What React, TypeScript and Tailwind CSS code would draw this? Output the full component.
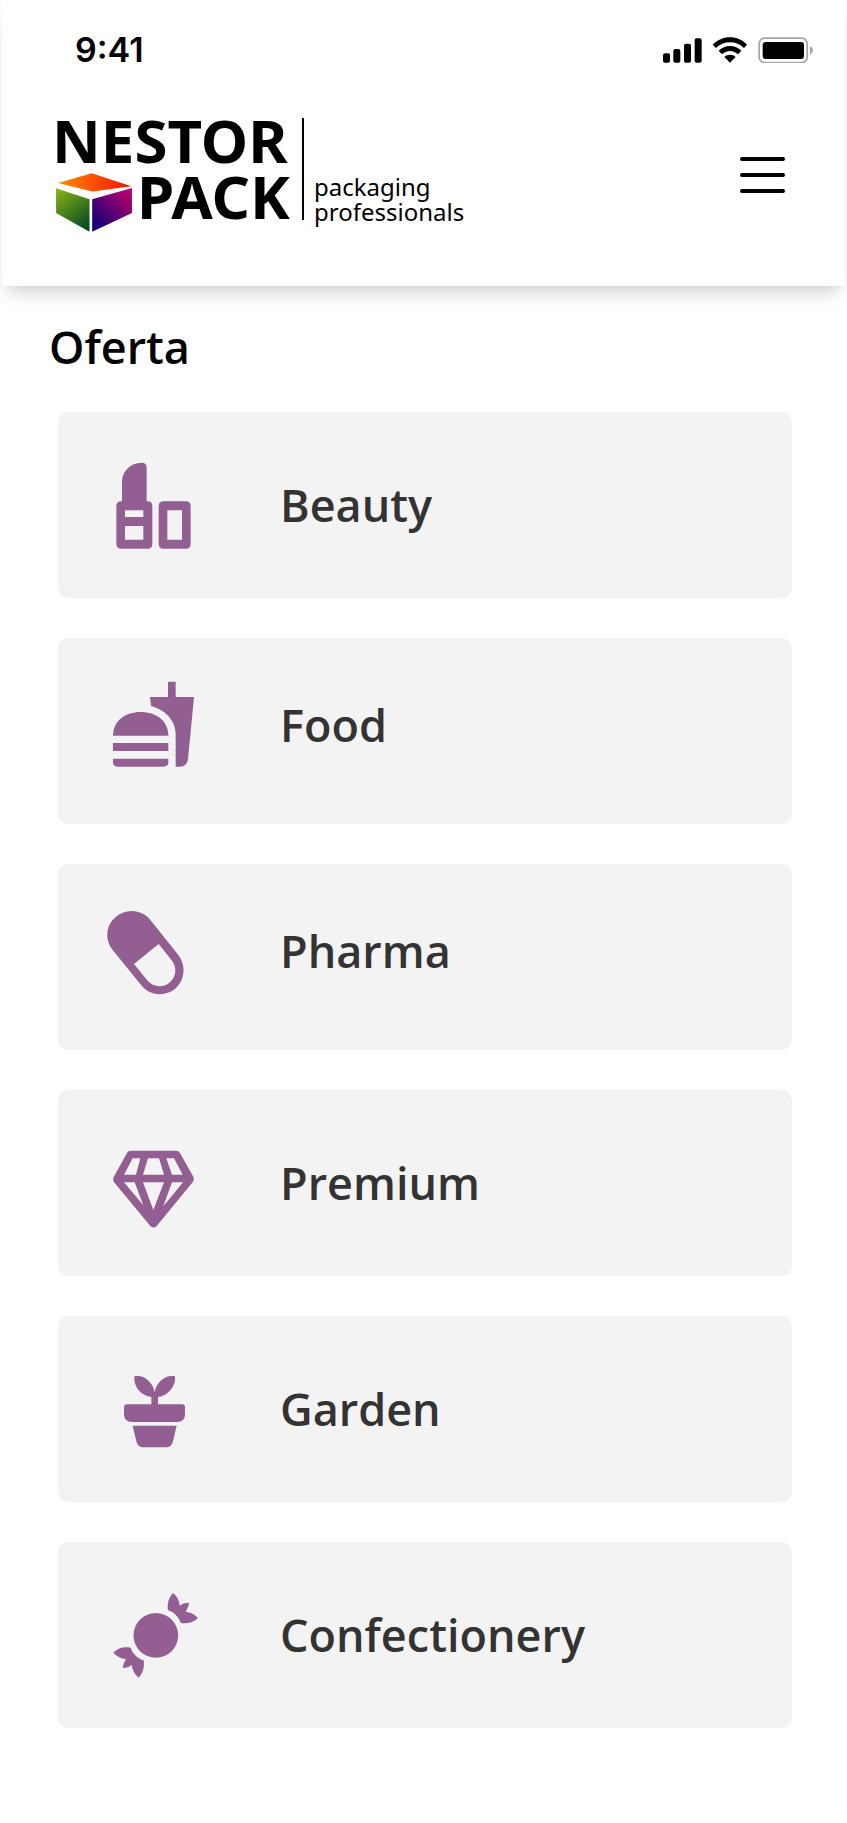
import type { ReactNode } from 'react';

type Category = {
  name: string;
  icon: ReactNode;
  raised?: boolean;
};

function Icon({ viewBox, children }: { viewBox: string; children: ReactNode }) {
  return (
    <svg viewBox={viewBox} className="size-[130px] shrink-0 fill-[#935f93]" aria-hidden="true">
      {children}
    </svg>
  );
}

const categories: Category[] = [
  {
    name: 'Beauty',
    icon: (
      <Icon viewBox="0 0 390 390">
        <path
          fillRule="evenodd"
          d="M96 184V125C96 94 121 68 155 68Q170 68 170 83V184H172Q187 184 187 199V311Q187 326 172 326H94Q79 326 79 311V199Q79 184 94 184ZM105 211V231H160V211ZM105 258V299H160V258Z"
        />
        <path
          fillRule="evenodd"
          d="M221 184H287Q302 184 302 199V311Q302 326 287 326H221Q206 326 206 311V199Q206 184 221 184ZM232 211V299H276V211Z"
        />
      </Icon>
    ),
  },
  {
    name: 'Food',
    raised: true,
    icon: (
      <Icon viewBox="0 0 390 390">
        <path d="M234 65H257V111H312L294 297Q291 320 270 320H257V222C257 180 224 149 183 138L180 111H234Z" />
        <path d="M69 227C69 182 106 156 152 156S235 182 235 227Z" />
        <path d="M69 249H235V273H69ZM69 296H235V306Q235 320 221 320H83Q69 320 69 306Z" />
      </Icon>
    ),
  },
  {
    name: 'Pharma',
    raised: true,
    icon: (
      <Icon viewBox="0 -12 390 390">
        <path
          fillRule="evenodd"
          d="M68 180C38 140 52 91 92 71C124 55 162 64 183 92L265 195C290 229 284 272 255 297C226 320 181 318 155 287ZM132 222L171 270C188 291 217 295 237 279C259 262 262 232 246 212L206 162Z"
        />
      </Icon>
    ),
  },
  {
    name: 'Premium',
    icon: (
      <Icon viewBox="0 -35 390 390">
        <path
          fillRule="evenodd"
          d="M122 63H258Q266 63 270 70L310 141Q314 149 309 156L200 289Q191 298 181 289L71 156Q67 149 71 142L111 70Q115 63 122 63ZM128 86L102 135H138L151 86ZM174 86L159 135H222L207 86ZM229 86L246 135H278L252 86ZM102 158L160 227L134 158ZM159 158L190 241L222 158ZM246 158L220 230L279 158Z"
        />
      </Icon>
    ),
  },
  {
    name: 'Garden',
    icon: (
      <Icon viewBox="0 -18 390 390">
        <path d="M184 163V141C154 138 130 112 133 79C162 72 190 98 194 127C198 98 226 72 255 79C258 109 234 138 204 141V163H276Q285 163 285 172V192Q285 216 261 216H127Q102 216 102 192V172Q102 163 111 163Z" />
        <path d="M128 227H260L249 274Q245 292 228 292H160Q143 292 139 274Z" />
      </Icon>
    ),
  },
  {
    name: 'Confectionery',
    icon: (
      <Icon viewBox="0 0 390 390">
        <circle cx="197.500" cy="196" r="67" />
        <path d="M249 69C261 78 268 92 269 107Q280 98 297 98Q296 112 287 125C302 127 315 133 324 144C311 157 293 162 272 159C267 142 251 125 234 121C231 101 236 83 249 69Z" />
        <path d="M70 248C84 234 102 229 122 233C127 250 143 266 161 271C164 291 159 309 146 323C134 314 127 300 125 285Q115 294 98 294Q99 280 108 268C93 266 80 259 70 248Z" />
      </Icon>
    ),
  },
];

function StatusBar() {
  return (
    <div className="flex items-center justify-between pt-7 pr-8 pl-[73px]">
      <span className="font-['Inter',sans-serif] text-[34px] leading-[44px] font-semibold">9:41</span>
      <svg viewBox="99 50 450 78" className="h-[26px] w-[150px]" aria-hidden="true">
        <rect x="99" y="99" width="21" height="28" rx="6" />
        <rect x="130" y="86" width="21" height="41" rx="6" />
        <rect x="162" y="70" width="21" height="57" rx="6" />
        <rect x="194" y="54" width="21" height="73" rx="6" />
        <path d="M300 51C320 51 338 59 351 73L342 83C331 72 316 66 300 66S269 72 258 83L248 73C262 59 280 51 300 51Z" />
        <path d="M300 77C313 77 325 82 334 91L324 102C317 96 309 92 300 92S283 96 276 102L266 91C275 82 287 77 300 77Z" />
        <path d="M300 103C307 103 312 105 317 110L300 127L283 110C288 105 293 103 300 103Z" />
        <rect x="387.500" y="53.500" width="144" height="73" rx="16" fill="none" stroke="#a6a6a6" strokeWidth="5" />
        <rect x="398" y="65" width="124" height="51" rx="9" />
        <path d="M540 78Q549 82 549 90T540 103Z" fill="#a6a6a6" />
      </svg>
    </div>
  );
}

function Logo() {
  return (
    <a href="#" className="flex items-end text-black">
      <span className="flex flex-col border-r-2 border-black pr-3 font-['Noto_Sans',sans-serif] text-[60px] leading-[56px] font-bold">
        <span className="-mt-[6px] -mb-[4px] -ml-1">
          <span className="block">NESTOR</span>
          <span className="flex items-end gap-[5px] pl-1">
            <svg viewBox="47 220 229 178" className="-mb-[8px] h-[59px] w-[76px]" aria-hidden="true">
              <defs>
                <linearGradient id="cube-top" x1="0" x2="1">
                  <stop stopColor="#ff8a00" />
                  <stop offset="1" stopColor="#ff1200" />
                </linearGradient>
                <linearGradient id="cube-left" x1="0.200" y1="0" x2="0.800" y2="1">
                  <stop stopColor="#84ac16" />
                  <stop offset="1" stopColor="#004b22" />
                </linearGradient>
                <linearGradient id="cube-right" x1="0.900" y1="0.100" x2="0.200" y2="0.900">
                  <stop stopColor="#b5006e" />
                  <stop offset="1" stopColor="#180078" />
                </linearGradient>
              </defs>
              <path d="M53 250L155 221L274 260L157 276Z" fill="url(#cube-top)" />
              <path d="M47 266L148 299V397L47 341Z" fill="url(#cube-left)" />
              <path d="M156 299L276 265V341L156 397Z" fill="url(#cube-right)" />
            </svg>
            <span>PACK</span>
          </span>
        </span>
      </span>
      <span className="-mb-[4px] pl-[10px] font-['Noto_Sans',sans-serif] text-[24px] leading-[25px]">
        packaging
        <br />
        professionals
      </span>
    </a>
  );
}

export default function App() {
  return (
    <div className="min-h-screen bg-white font-['Open_Sans',sans-serif] text-black">
      <header className="mx-[2px] bg-white pb-[66px] shadow-[0_13px_16px_-6px_rgba(0,0,0,0.17),0_0_2px_rgba(0,0,0,0.06)]">
        <StatusBar />
        <div className="flex items-start justify-between pt-[46px] pr-[60px] pl-[54px]">
          <Logo />
          <button type="button" aria-label="Menu" className="mt-[39px] flex w-[45px] flex-col gap-3">
            <span className="h-1 w-full rounded-full bg-black" />
            <span className="h-1 w-full rounded-full bg-black" />
            <span className="h-1 w-full rounded-full bg-black" />
          </button>
        </div>
      </header>
      <main className="pt-[31px] pb-20">
        <h1 className="pl-[49px] text-[45px] leading-[60px] font-semibold">Oferta</h1>
        <ul className="mt-[35px] mr-[55px] ml-[58px] flex flex-col gap-10">
          {categories.map(({ name, icon, raised }) => (
            <li key={name}>
              <a
                href={'#' + name.toLowerCase()}
                className={
                  raised
                    ? 'flex h-[186px] items-center gap-[60px] rounded-[10px] bg-[#f3f3f3] pb-3 pl-8'
                    : 'flex h-[186px] items-center gap-[60px] rounded-[10px] bg-[#f3f3f3] pl-8'
                }
              >
                {icon}
                <span className="text-[45px] leading-[60px] font-semibold text-[#333333]">{name}</span>
              </a>
            </li>
          ))}
        </ul>
      </main>
    </div>
  );
}
